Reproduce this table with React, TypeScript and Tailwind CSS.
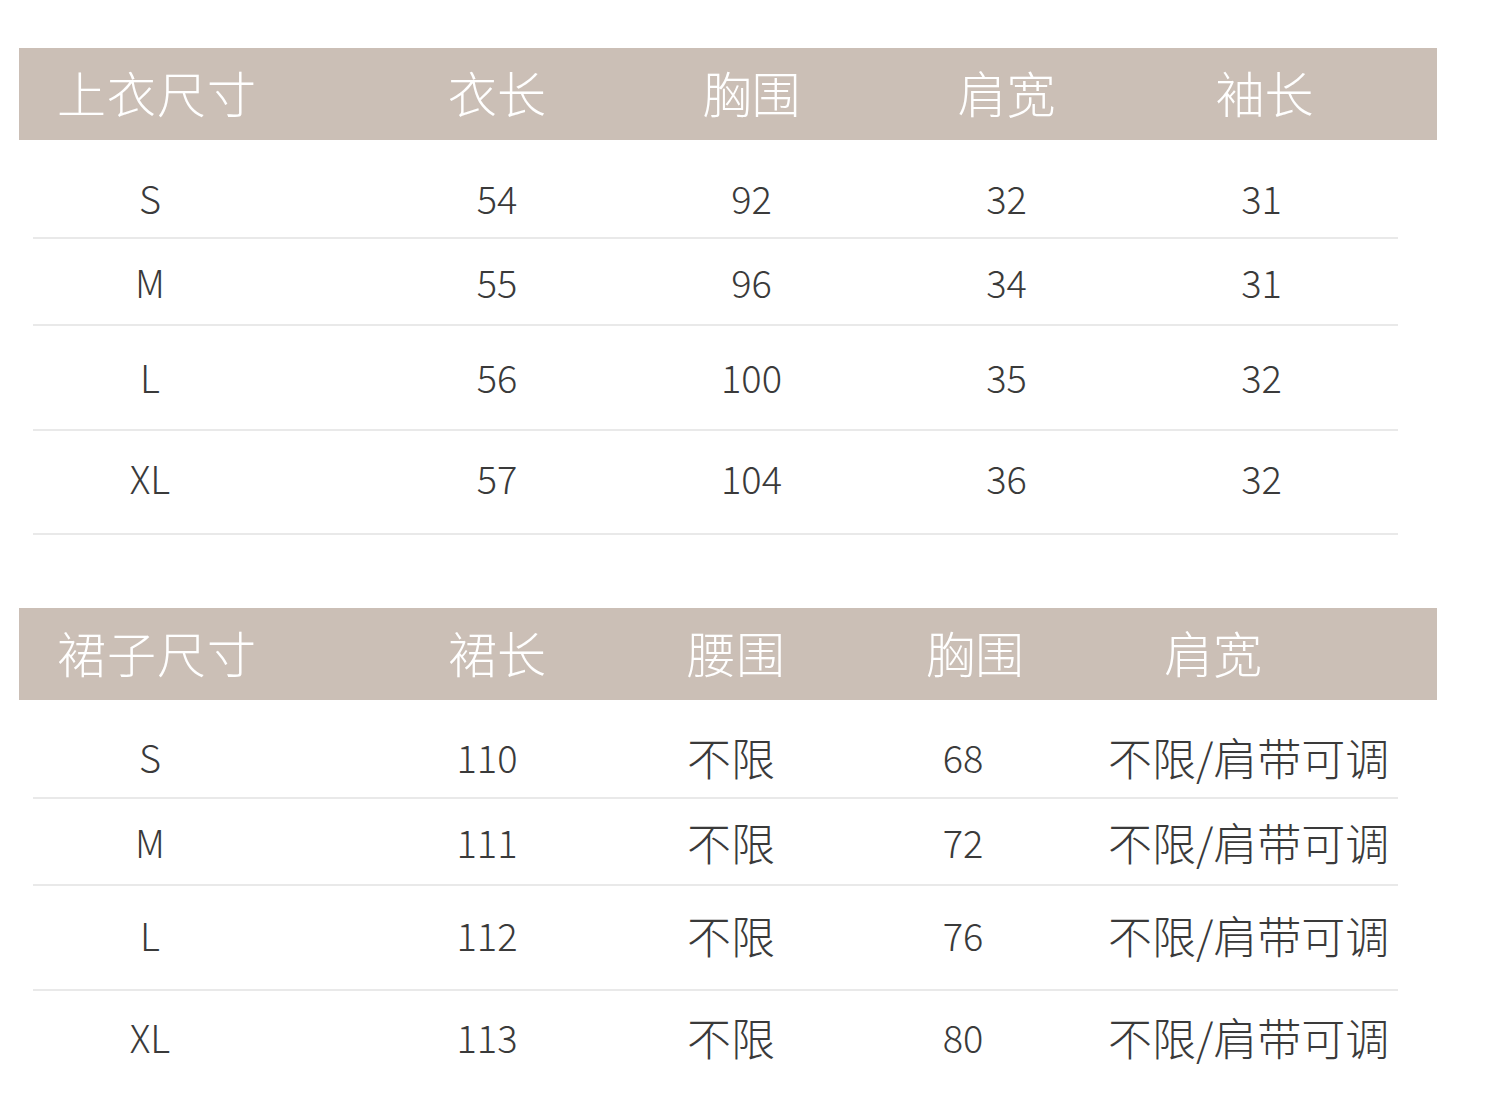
import React from "react";

const FONT = { fontFamily: '"Noto Sans CJK SC", "Noto Sans", sans-serif' };

type Cell = { t: string; cls?: string };

function Line() {
  return <div className="ml-[14px] h-[2px] w-[1365px] bg-[#e9e9e9]" />;
}

function Header({ cols, first, widths }: { cols: Cell[]; first: string; widths: string }) {
  return (
    <div className={`grid ${widths} h-[92px] pb-[6px] items-center bg-[#cbbfb6] text-[49px] font-light text-white leading-none`}>
      <div className="pl-[38px] tracking-[1px]">{first}</div>
      {cols.map((c, i) => (
        <div key={i} className={c.cls ?? "text-center"}>
          {c.t}
        </div>
      ))}
    </div>
  );
}

function Row({ cells, h, pad, widths }: { cells: Cell[]; h: string; pad: string; widths: string }) {
  return (
    <div className={`grid ${widths} ${h} ${pad} items-center text-[#3a3a3a] font-light leading-none`}>
      {cells.map((c, i) => (
        <div key={i} className={c.cls ?? "text-center"}>
          {c.t}
        </div>
      ))}
    </div>
  );
}

export default function App() {
  const topW = "grid-cols-[351px_254px_255px_255px_255px]";
  const botW = "grid-cols-[355px_240px_240px_240px_1fr]";
  const topRows = [
    ["S", "54", "92", "32", "31"],
    ["M", "55", "96", "34", "31"],
    ["L", "56", "100", "35", "32"],
    ["XL", "57", "104", "36", "32"],
  ];
  const topH = [
    { h: "h-[97px]", pad: "pt-[19px]" },
    { h: "h-[85px]", pad: "pt-0" },
    { h: "h-[103px]", pad: "pb-[1px]" },
    { h: "h-[102px]", pad: "pb-[8px]" },
  ];
  const botRows = [
    ["S", "110", "68"],
    ["M", "111", "72"],
    ["L", "112", "76"],
    ["XL", "113", "80"],
  ];
  const botH = [
    { h: "h-[97px]", pad: "pt-[16px]" },
    { h: "h-[85px]", pad: "pt-0" },
    { h: "h-[103px]", pad: "pb-[6px]" },
    { h: "h-[104px]", pad: "pb-[12px]" },
  ];

  return (
    <div className="w-[1500px] h-[1095px] bg-white overflow-hidden" style={FONT}>
      <div className="pt-[48px] pl-[19px] w-[1437px]">
        <Header
          first="上衣尺寸"
          widths={topW}
          cols={[
            { t: "衣长" },
            { t: "胸围" },
            { t: "肩宽" },
            { t: "袖长", cls: "text-center pl-[6px]" },
          ]}
        />
        {topRows.map((r, i) => (
          <React.Fragment key={i}>
            <Row
              widths={topW}
              h={topH[i].h}
              pad={topH[i].pad}
              cells={[
                { t: r[0], cls: "w-[262px] text-center text-[38px]" },
                { t: r[1], cls: "text-center text-[38px]" },
                { t: r[2], cls: "text-center text-[38px]" },
                { t: r[3], cls: "text-center text-[38px]" },
                { t: r[4], cls: "text-center text-[38px]" },
              ]}
            />
            <Line />
          </React.Fragment>
        ))}

        <div className="h-[73px]" />

        <Header
          first="裙子尺寸"
          widths={botW}
          cols={[
            { t: "裙长", cls: "text-center pl-[6px]" },
            { t: "腰围", cls: "text-center pl-[4px]" },
            { t: "胸围", cls: "text-center pl-[2px]" },
            { t: "肩宽", cls: "pl-[70px]" },
          ]}
        />
        {botRows.map((r, i) => (
          <React.Fragment key={i}>
            <Row
              widths={botW}
              h={botH[i].h}
              pad={botH[i].pad}
              cells={[
                { t: r[0], cls: "w-[262px] text-center text-[38px]" },
                { t: r[1], cls: "text-center text-[38px] pr-[14px]" },
                { t: "不限", cls: "text-center text-[44px] pr-[6px]" },
                { t: r[2], cls: "text-center text-[38px] pr-[22px]" },
                { t: "不限/肩带可调", cls: "pl-[14px] text-[44px] whitespace-nowrap" },
              ]}
            />
            {i < 3 && <Line />}
          </React.Fragment>
        ))}
      </div>
    </div>
  );
}
